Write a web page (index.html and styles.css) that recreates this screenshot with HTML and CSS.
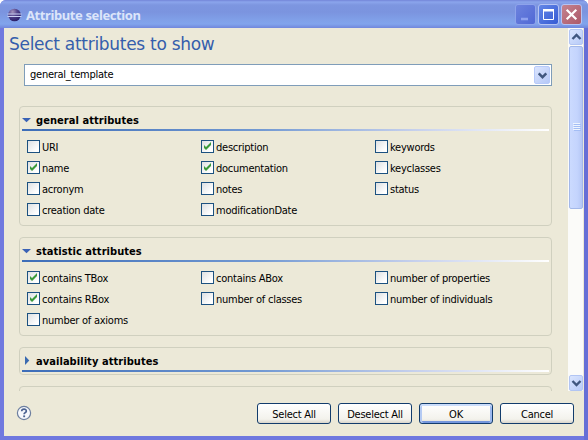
FILE: index.html
```html
<!DOCTYPE html>
<html lang="en">
<head>
<meta charset="utf-8">
<title>Attribute selection</title>
<link rel="stylesheet" href="styles.css">
</head>
<body>
<div class="window">
  <header class="titlebar">
    <svg class="logo" width="15" height="14" viewBox="0 0 15 14">
      <defs><radialGradient id="orb" cx=".35" cy=".25" r=".8"><stop offset="0" stop-color="#a595bd"/><stop offset=".45" stop-color="#54458c"/><stop offset="1" stop-color="#251b65"/></radialGradient></defs>
      <circle cx="7.5" cy="7" r="6.3" fill="url(#orb)"/>
      <path d="M.5 6h14M.5 8.5h14" stroke="#c9d0f3" stroke-width="1"/>
    </svg>
    <span class="caption">Attribute selection</span>
    <div class="controls">
      <span class="control minimize"><svg width="19" height="19"><path d="M5 14h7" stroke="#8fa2ef" stroke-width="2.4"/></svg></span>
      <span class="control maximize"><svg width="19" height="19"><path d="M4.5 5v9.5h10V5" fill="none" stroke="#fff"/><path d="M4 5.2h11" stroke="#fff" stroke-width="2.6"/></svg></span>
      <span class="control close"><svg width="19" height="19"><path d="M4.7 4.7l9.6 9.6M14.3 4.7l-9.6 9.6" stroke="#fff" stroke-width="2.2"/></svg></span>
    </div>
  </header>
  <main class="client">
    <div class="viewport">
      <div class="form">
        <h1>Select attributes to show</h1>
        <div class="combo"><span class="value">general_template</span><span class="drop"><svg width="15" height="17"><path d="M3.7 6.3l3.8 3.9 3.8-3.9" fill="none" stroke="#40577f" stroke-width="2.4"/></svg></span></div>
        <section class="group general">
          <h2><svg width="9" height="9"><path d="M0 3h9L4.5 7.2z" fill="#3a62b5"/></svg>general attributes</h2>
          <div class="rule"></div>
          <div class="columns">
            <div class="column"><label><i></i>URI</label><label><i class="on"></i>name</label><label><i></i>acronym</label><label><i></i>creation date</label></div>
            <div class="column"><label><i class="on"></i>description</label><label><i class="on"></i>documentation</label><label><i></i>notes</label><label><i></i>modificationDate</label></div>
            <div class="column"><label><i></i>keywords</label><label><i></i>keyclasses</label><label><i></i>status</label></div>
          </div>
        </section>
        <section class="group statistic">
          <h2><svg width="9" height="9"><path d="M0 3h9L4.5 7.2z" fill="#3a62b5"/></svg>statistic attributes</h2>
          <div class="rule"></div>
          <div class="columns">
            <div class="column"><label><i class="on"></i>contains TBox</label><label><i class="on"></i>contains RBox</label><label><i></i>number of axioms</label></div>
            <div class="column"><label><i></i>contains ABox</label><label><i></i>number of classes</label></div>
            <div class="column"><label><i></i>number of properties</label><label><i></i>number of individuals</label></div>
          </div>
        </section>
        <section class="group availability">
          <h2><svg width="9" height="9"><path d="M3 0v9l4.3-4.5z" fill="#3a6ab0"/></svg>availability attributes</h2>
          <div class="rule"></div>
        </section>
        <section class="group next"></section>
      </div>
      <div class="scrollbar">
        <span class="arrow"><svg width="13" height="14"><path d="M2.5 9l4-4 4 4" fill="none" stroke="#40577f" stroke-width="2.4"/></svg></span>
        <div class="thumb"><svg width="8" height="8"><path d="M0 .5h7M0 2.5h7M0 4.5h7M0 6.5h7" stroke="#eef4fe"/><path d="M1 1.5h7M1 3.5h7M1 5.5h7M1 7.5h7" stroke="#a3bdf5"/></svg></div>
        <span class="arrow down"><svg width="13" height="14"><path d="M2.5 5l4 4 4-4" fill="none" stroke="#40577f" stroke-width="2.4"/></svg></span>
      </div>
    </div>
    <footer class="footer">
      <svg class="help" width="16" height="16"><circle cx="8" cy="8" r="6.6" fill="#f6f8fc" stroke="#6d7f9f" stroke-width="1.2"/><path d="M5.7 6.3c0-3 4.8-2.9 4.6-.2-.1 1.6-2.2 1.5-2.2 3.2" fill="none" stroke="#4b6291" stroke-width="1.7"/><path d="M7.2 10.4h1.9v1.8H7.2z" fill="#4b6291"/></svg>
      <div class="buttons">
        <button>Select All</button><button>Deselect All</button><button class="default">OK</button><button>Cancel</button>
      </div>
    </footer>
  </main>
</div>
</body>
</html>
```
FILE: styles.css
```css
* { box-sizing: border-box; }
body {
  margin: 0;
  background: #fff;
  font: 11px/13px "DejaVu Sans Condensed", "DejaVu Sans", sans-serif;
  font-stretch: condensed;
  letter-spacing: -0.25px;
  color: #000;
}
svg { display: block; }
.window {
  width: 588px;
  height: 440px;
  display: flex;
  flex-direction: column;
  overflow: hidden;
  border-radius: 6px 6px 0 0;
  background: #7079df;
}
.titlebar {
  height: 28px;
  flex: none;
  display: flex;
  align-items: center;
  padding: 1px 6px 0 7px;
  background: linear-gradient(#7385d8 0, #8ba5ec 2px, #7d96e0 5px, #7b94df 12px, #80a0e8 20px, #81a4ec 24px, #7187dc 28px);
}
.logo { flex: none; }
.caption {
  margin-left: 4px;
  font: bold 13px/16px "Noto Sans", "Open Sans", sans-serif;
  letter-spacing: -0.4px;
  color: #dce5fa;
  flex: 1;
}
.controls { display: flex; gap: 2px; }
.control {
  width: 21px;
  height: 21px;
  border: 1px solid #b5c3f3;
  border-radius: 3px;
}
.minimize { background: linear-gradient(135deg, #6d83de, #5068d5); border-color: #8ea3eb; }
.maximize { background: linear-gradient(135deg, #6487e7, #365bd4); }
.close { background: linear-gradient(135deg, #c5838f, #ac5969); }
.client {
  flex: 1;
  min-height: 0;
  margin: 0 4px;
  border-bottom: 4px solid #6f78df;
  background: #ece9d8;
  box-shadow: -4px 0 0 #7079df, 4px 0 0 #666fd6, 0 2px 0 #4e59c2;
}
.viewport { height: 363px; display: flex; overflow: hidden; }
.form { width: 564px; flex: none; padding: 7px 16px 0 15px; }
h1 {
  margin: 0 0 0 -10px;
  height: 29px;
  font: 17px/19px "DejaVu Sans", sans-serif;
  letter-spacing: -0.29px;
  color: #355eac;
}
.combo {
  height: 22px;
  margin-left: 5px;
  display: flex;
  align-items: center;
  justify-content: space-between;
  border: 1px solid #7f9db9;
  background: #fff;
  padding: 0 1px 0 5px;
}
.value { padding-bottom: 2px; }
.drop { width: 16px; height: 18px; border: 1px solid #b7cafa; border-radius: 2px; background: linear-gradient(135deg, #dbe5fe, #b5c8f7); }
.group {
  border: 1px solid #d0d0bf;
  border-radius: 4px;
  padding: 0 2px;
}
.general { height: 120px; margin-top: 20px; }
.statistic { height: 99px; margin-top: 11px; }
.availability { height: 28px; margin-top: 11px; }
.next { height: 28px; margin-top: 11px; }
h2 {
  margin: 0;
  height: 22px;
  padding-top: 5px;
  display: flex;
  align-items: center;
  gap: 5px;
  font: bold 11px/13px "DejaVu Sans Condensed", "DejaVu Sans", sans-serif;
  letter-spacing: 0.06px;
}
h2 svg { margin-top: -2px; }
.rule { height: 2px; background: linear-gradient(90deg, #3d6db8, #7299d2 45%, #c7d1ed 75%, #fff); }
.columns { display: flex; padding: 9px 0 0 5px; }
.column { width: 174px; display: flex; flex-direction: column; gap: 8px; }
label { display: flex; align-items: flex-start; height: 13px; line-height: 15px; gap: 2px; white-space: nowrap; }
label i {
  width: 13px;
  height: 13px;
  border: 1px solid #1c5180;
  background: linear-gradient(135deg, #dde0e2, #fff 80%);
}
label i.on::before {
  content: "";
  display: block;
  width: 9px;
  height: 9px;
  margin: 1px;
  background: #3a9a3a;
  clip-path: polygon(1px 3px, 3px 5px, 8px 0, 8px 3px, 3px 8px, 1px 6px);
}
.scrollbar { width: 15px; flex: none; background: #fbfbf9; display: flex; flex-direction: column; padding: 1px 0 0 1px; }
.arrow { width: 14px; height: 16px; border: 1px solid #b2c5f3; border-radius: 2px; background: linear-gradient(135deg, #dae5fe, #b8cbf8); }
.thumb { height: 163px; width: 14px; margin-top: 1px; border: 1px solid #a3b8e9; border-radius: 2px; background: linear-gradient(90deg, #cbdafe, #c4d4fd 60%, #b5c7f5); padding: 76px 0 0 3px; }
.down { margin-top: auto; }
.footer { height: 45px; display: flex; justify-content: space-between; align-items: flex-start; padding: 12px 10px 0 12px; }
.help { margin-top: 2px; }
.buttons { display: flex; gap: 7px; }
button {
  width: 74px;
  height: 21px;
  padding: 1px 0 0;
  border: 1px solid #123c6c;
  border-radius: 3px;
  background: linear-gradient(#fff, #f3f2ec 80%, #d9d5cb);
  font: inherit;
  letter-spacing: inherit;
  color: #000;
}
.default { box-shadow: inset 0 2px #cbddfb, inset 2px 0 #b4caf3, inset -2px 0 #9db9ee, inset 0 -2px #7597dd; }
```
